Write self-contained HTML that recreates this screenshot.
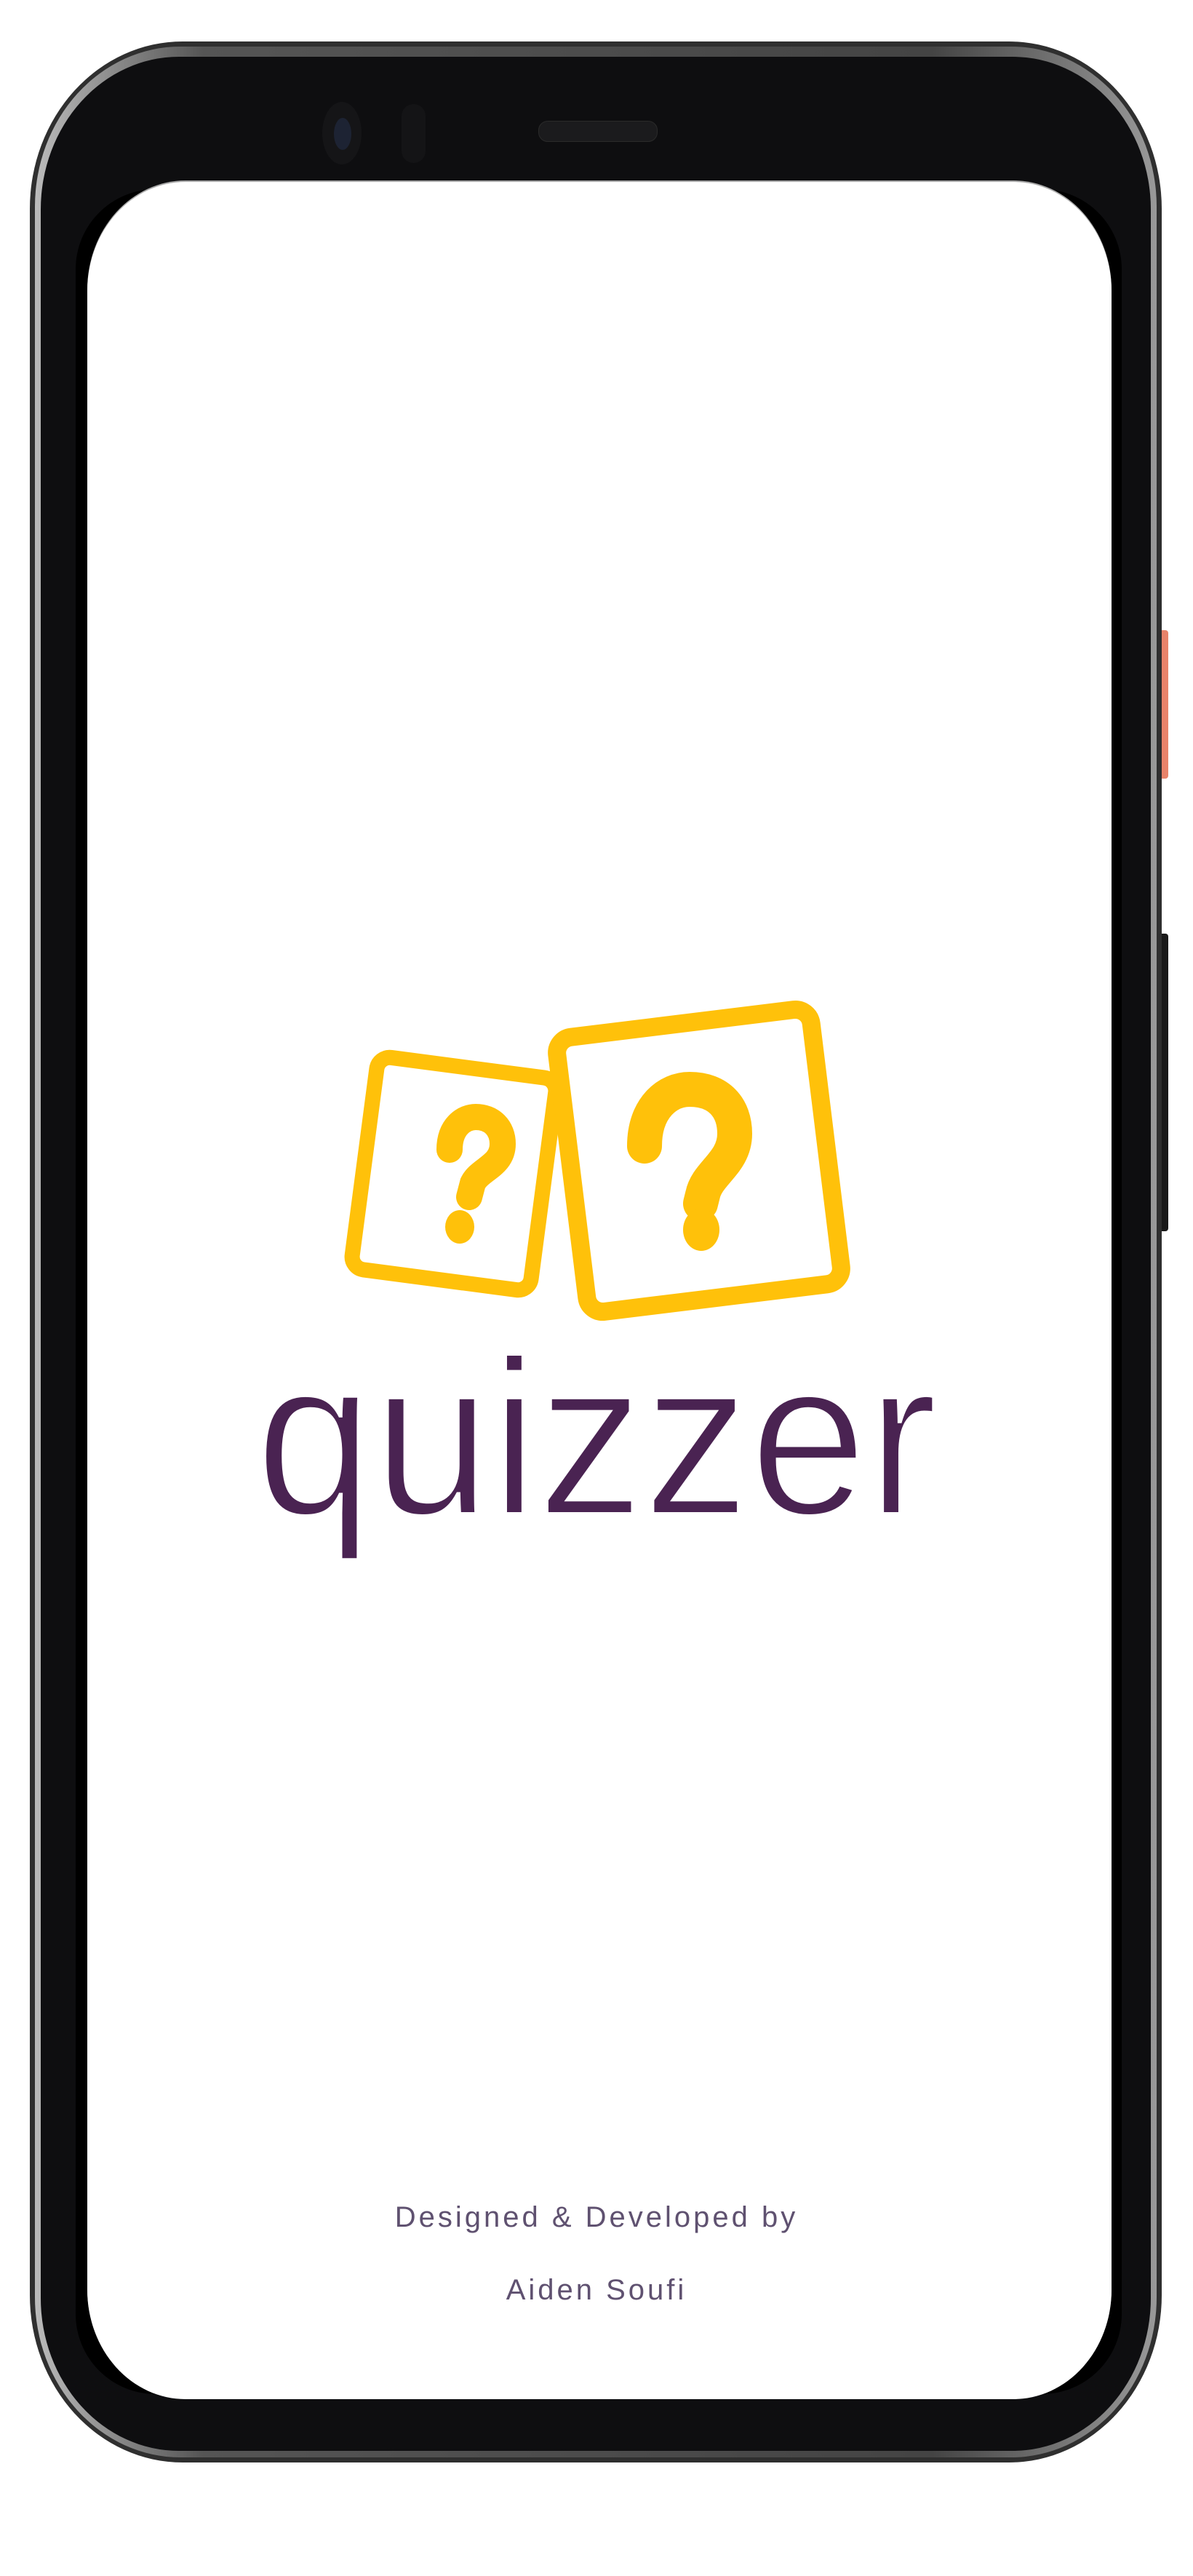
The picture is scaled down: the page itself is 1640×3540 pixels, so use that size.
<!DOCTYPE html>
<html><head><meta charset="utf-8"><style>
html,body{margin:0;padding:0;background:#fff;}
body{width:1640px;height:3540px;position:relative;overflow:hidden;font-family:"Liberation Sans",sans-serif;}
.a{position:absolute;}
</style></head><body>
<!-- side buttons -->
<div class="a" style="left:1588px;top:866px;width:18px;height:204px;background:#e8836a;border-radius:0 4px 4px 0;"></div>
<div class="a" style="left:1588px;top:1283px;width:18px;height:409px;background:#1a1a1a;border-radius:0 4px 4px 0;"></div>
<!-- phone body -->
<div class="a" style="left:41px;top:57px;width:1556px;height:3327px;background:#2f2f2f;border-radius:210px/230px;"></div>
<div class="a" style="left:48px;top:64px;width:1542px;height:3313px;background:linear-gradient(90deg,#bbb,#555 15%,#444 80%,#999);border-radius:200px/220px;"></div>
<div class="a" style="left:56px;top:78px;width:1526px;height:3290px;background:#0e0e10;border-radius:190px/210px;"></div>
<!-- screen -->
<div class="a" style="left:104px;top:260px;width:1438px;height:3030px;background:#000;border-radius:110px;"></div>
<div class="a" style="left:120px;top:250px;width:1408px;height:3047px;background:#fff;border-radius:135px/150px;box-shadow:0 -2px 0 #aaa;"></div>
<!-- camera -->
<div class="a" style="left:443px;top:140px;width:54px;height:86px;background:#151517;border-radius:50%;"></div>
<div class="a" style="left:459px;top:162px;width:24px;height:44px;background:#1d2333;border-radius:50%;"></div>
<div class="a" style="left:552px;top:143px;width:33px;height:81px;background:#141416;border-radius:17px;"></div>
<div class="a" style="left:740px;top:166px;width:162px;height:27px;background:#1b1b1d;border-radius:13px;border:1px solid #2a2a2a;"></div>
<!-- logo -->
<svg class="a" style="left:0;top:0" width="1640" height="3540" viewBox="0 0 1640 3540">
 <g transform="translate(624 1613) rotate(7.5)">
  <rect x="-124" y="-147" width="248" height="294" rx="18" fill="#fff" stroke="#FFC10A" stroke-width="21"/>
 </g>
 <g transform="translate(961 1595) rotate(-7)">
  <rect x="-176" y="-190" width="352" height="380" rx="22" fill="#fff" stroke="#FFC10A" stroke-width="25"/>
 </g>
 <path d="M618 1580 C618 1548 638 1535 654 1535 C676 1535 691 1550 691 1572 C691 1602 660 1606 650 1626 L645 1645" fill="none" stroke="#FFC10A" stroke-width="36" stroke-linecap="round"/>
 <ellipse cx="632" cy="1686" rx="20" ry="23" fill="#FFC10A"/>
 <path d="M886 1575 C886 1522 918 1497 948 1497 C988 1497 1010 1522 1010 1558 C1010 1598 972 1612 966 1642 L963 1654" fill="none" stroke="#FFC10A" stroke-width="48" stroke-linecap="round"/>
 <ellipse cx="964" cy="1690" rx="25" ry="29" fill="#FFC10A"/>
 <text x="820" y="2081" text-anchor="middle" textLength="938" lengthAdjust="spacingAndGlyphs" font-family="Liberation Sans" font-size="305" fill="#4a2352" stroke="#fff" stroke-width="6">quizzer</text>
</svg>
<div class="a" style="left:0;width:1640px;top:3025px;text-align:center;font-size:40px;letter-spacing:4px;color:#5f5170;">Designed &amp; Developed by</div>
<div class="a" style="left:0;width:1640px;top:3125px;text-align:center;font-size:40px;letter-spacing:4px;color:#5f5170;">Aiden Soufi</div>
</body></html>
